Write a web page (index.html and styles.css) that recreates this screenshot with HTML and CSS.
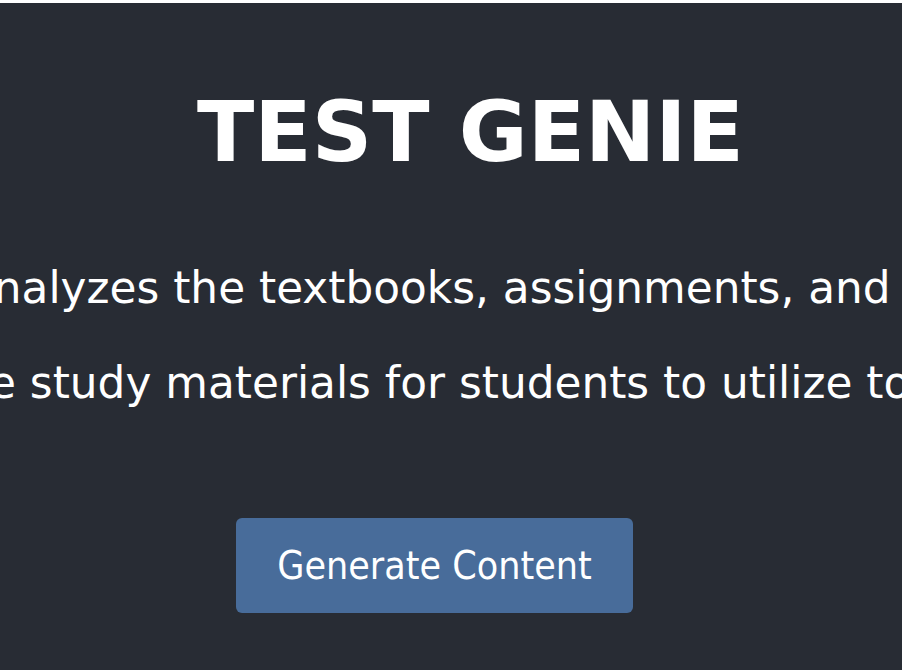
FILE: index.html
```html
<!DOCTYPE html>
<html lang="en">
<head>
<meta charset="utf-8">
<title>Test Genie</title>
<link rel="stylesheet" href="styles.css">
</head>
<body>
<div class="topbar"></div>
<main class="app">
  <h1 class="title">TEST GENIE</h1>
  <div class="intro">
    <p class="line line-1">analyzes the textbooks, assignments, and</p>
    <p class="line line-2">e study materials for students to utilize to</p>
  </div>
  <button class="generate" type="button">Generate Content</button>
</main>
</body>
</html>
```

FILE: styles.css
```css
html, body {
  margin: 0;
  padding: 0;
  height: 100%;
  overflow: hidden;
  background: #282c34;
}

.topbar {
  height: 3px;
  background: #ffffff;
}

.app {
  display: flex;
  flex-direction: column;
  align-items: flex-start;
  height: 667px;
  background: #282c34;
  color: #ffffff;
  overflow: hidden;
  font-family: "DejaVu Sans", Verdana, sans-serif;
}

.title {
  margin: 81px 0 0 197px;
  font-family: "DejaVu Sans", Verdana, sans-serif;
  font-weight: bold;
  font-size: 84px;
  line-height: 96px;
  white-space: nowrap;
}

.intro {
  margin-top: 60px;
  display: flex;
  flex-direction: column;
}

.line {
  margin: 0;
  font-size: 43.8px;
  line-height: 95px;
  white-space: nowrap;
}

.line-1 {
  margin-left: -33px;
}

.line-2 {
  margin-left: -11px;
}

.generate {
  margin: 88px 0 0 236px;
  width: 397px;
  height: 95px;
  border: none;
  border-radius: 6px;
  background: #486c9a;
  color: #ffffff;
  font-family: "DejaVu Sans Condensed", "DejaVu Sans", sans-serif;
  font-size: 39px;
  padding: 0;
}
```
